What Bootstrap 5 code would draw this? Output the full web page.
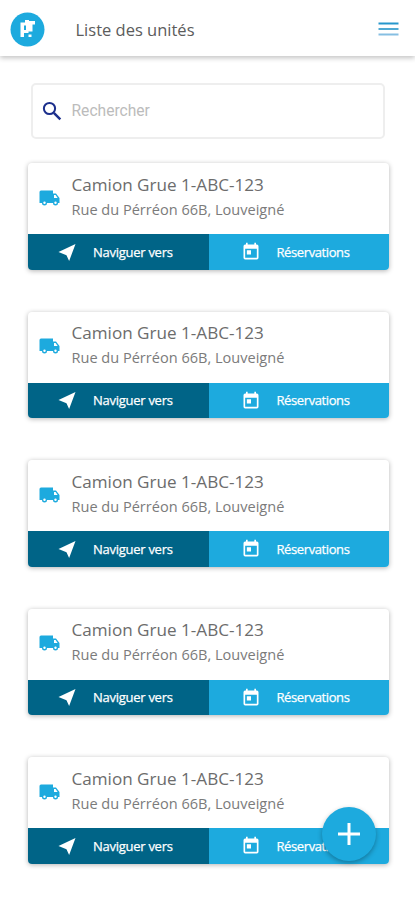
<!DOCTYPE html>
<html lang="fr">
<head>
<meta charset="utf-8">
<meta name="viewport" content="width=device-width, initial-scale=1">
<title>Liste des unités</title>
<link href="https://cdn.jsdelivr.net/npm/bootstrap@5.3.0/dist/css/bootstrap.min.css" rel="stylesheet">
<style>
body{font-family:"Open Sans","Noto Sans",sans-serif;background:#fff;height:900px;overflow:hidden}
svg{display:block;flex:none}
.topbar{height:56px;padding:2px 16px 0 10px;box-shadow:0 2px 5px rgba(0,0,0,.24)}
.brand-title{font-size:16.5px;color:#5c5c5c;margin-left:30.5px;padding-top:2px;white-space:nowrap}
.menu-btn{line-height:1}
.search-box{margin:27px 30px 0 31px;height:56px;border:2px solid #eee;border-radius:5px;padding-left:9px}
.search-box input{font-family:Roboto,sans-serif;font-size:15.6px;color:#777;padding:2px 0 0;margin-left:9.5px}
.search-box input::placeholder{color:#bcbcbc;opacity:1}
.units{padding:24px 26px 0 28px;gap:42px}
.unit{height:106.5px;border-radius:4px;box-shadow:0 1px 5px rgba(0,0,0,.3);overflow:hidden;background:#fff}
.unit-info{height:71px;padding:0 0 2px 11px}
.unit-text{margin:-2px 0 0 11.5px}
.unit-name{font-size:17.1px;line-height:24px;color:#6c6c6c;white-space:nowrap}
.unit-place{font-size:14.55px;line-height:24px;color:#7b7b7b;white-space:nowrap}
.act{height:35.5px;color:#fff;font-size:13px;font-weight:500;letter-spacing:-.27px;border:0;border-radius:0;padding:0;white-space:nowrap;-webkit-text-stroke:.25px #fff}
.act:hover{color:#fff}
.go{background:#006487;padding:1px 0 0 30px}
.book{background:#1daade;padding:1px 0 0 32px}
.go-label{margin-left:17px}
.book-label{margin-left:16px;letter-spacing:-.4px}
.add-btn{right:39px;top:807px;width:54px;height:54px;background:#1daade;box-shadow:0 2px 5px rgba(0,0,0,.3);padding:0}
</style>
<script src="https://cdn.jsdelivr.net/npm/bootstrap@5.3.0/dist/js/bootstrap.bundle.min.js"></script>
</head>
<body>
<svg class="d-none">
<symbol id="truck" viewBox="0 0 21 16"><path fill="#1daade" d="M2 .5h12v3h3l3.500 4.500v5h-1.500a2.500 2.500 0 0 1-5 0H8a2.500 2.500 0 0 1-5 0H.5V2A1.500 1.500 0 0 1 2 .5z"/><path fill="#fff" d="M15 5h1.600l2 3H15z"/><circle cx="5.500" cy="12.800" r="1.200" fill="#fff"/><circle cx="16.500" cy="12.800" r="1.200" fill="#fff"/></symbol>
<symbol id="arrow" viewBox="0 0 16 16"><path fill="#fff" d="M16 0 10 16 7.500 10.500 0 7.500z"/></symbol>
<symbol id="cal" viewBox="0 0 24 24"><path fill="#fff" d="M19 3h-1V1h-2v2H8V1H6v2H5a2 2 0 0 0-2 2v14a2 2 0 0 0 2 2h14a2 2 0 0 0 2-2V5a2 2 0 0 0-2-2zm0 16H5V8h14v11zM7 10h5v5H7z"/></symbol>
</svg>
<header class="topbar d-flex align-items-center bg-white">
<svg width="35" height="35" viewBox="0 0 35 35"><circle cx="17.500" cy="17.500" r="17" fill="#1daade"/><path fill="#fff" fill-rule="evenodd" d="M10.500 10.500H15V8h4v1h6v3.500h-2.500v7h-4V21H14v4h-3.500zM14 13.500V18h2v-4.500z"/><path fill="#fff" d="M18.500 22.500h3V25h-3z"/></svg>
<span class="brand-title">Liste des unités</span>
<button class="menu-btn btn p-0 border-0 ms-auto" aria-label="Menu"><svg width="21" height="15" viewBox="0 0 21 15"><path stroke="#2797cc" stroke-width="2" d="M.5 1.500h20"/><path stroke="#4fa9d3" stroke-width="2" d="M.5 7h20"/><path stroke="#86bfe2" stroke-width="2" d="M.5 12.500h20"/></svg></button>
</header>
<main>
<div class="search-box d-flex align-items-center">
<svg width="20" height="20" viewBox="0 0 20 20" fill="none" stroke="#1c2f8c"><circle cx="7.500" cy="7.500" r="5.600" stroke-width="2"/><path stroke-width="2.500" d="m11.800 11.800 6.500 6.500"/></svg>
<input class="form-control border-0 shadow-none bg-transparent" placeholder="Rechercher" aria-label="Rechercher">
</div>
<div class="units d-flex flex-column" id="units"></div>
</main>
<button class="add-btn btn rounded-circle border-0 position-fixed d-flex align-items-center justify-content-center" aria-label="Ajouter"><svg width="22" height="22" viewBox="0 0 22 22"><path stroke="#fff" stroke-width="3" d="M11 0v22M0 11h22"/></svg></button>
<script>
document.getElementById('units').innerHTML = Array.from({length: 5}, () => `
<article class="unit">
<div class="unit-info d-flex align-items-center">
<svg width="21" height="16"><use href="#truck"/></svg>
<div class="unit-text"><div class="unit-name">Camion Grue 1-ABC-123</div><div class="unit-place">Rue du Pérréon 66B, Louveigné</div></div>
</div>
<div class="row g-0">
<div class="col-6"><button class="act go btn w-100 d-flex align-items-center"><svg width="18" height="17"><use href="#arrow"/></svg><span class="go-label">Naviguer vers</span></button></div>
<div class="col-6"><button class="act book btn w-100 d-flex align-items-center"><svg width="20" height="20"><use href="#cal"/></svg><span class="book-label">Réservations</span></button></div>
</div>
</article>`).join('');
</script>
</body>
</html>
